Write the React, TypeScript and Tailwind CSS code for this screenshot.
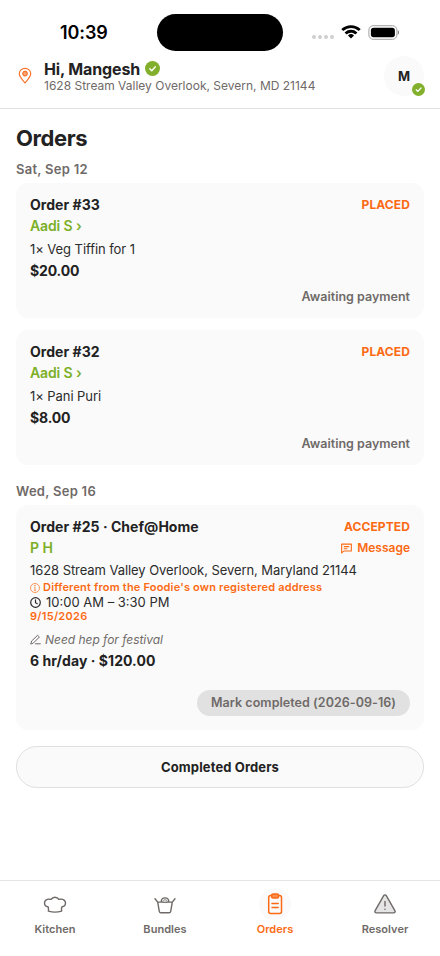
import type { ReactNode } from "react"

function CheckBadge({ className }: { className: string }) {
    return (
        <svg viewBox="0 0 14 14" className={className}>
            <circle cx="7" cy="7" r="7" fill="#83b02c" />
            <path d="M4.500 7.300l1.800 1.800 3.400-3.700" fill="none" stroke="#fff" strokeWidth="1.300" strokeLinecap="round" strokeLinejoin="round" />
        </svg>
    )
}

function StatusBar() {
    return (
        <div className="flex h-[52px] items-start">
            <div className="ml-[60px] mt-[22px] w-[97px] text-[18px] font-semibold leading-[22px] tracking-[-0.1px] text-black">10:39</div>
            <div className="mt-[14px] h-[37px] w-[126px] rounded-full bg-black" />
            <div className="ml-[29px] mt-[35px] flex gap-[2px]">
                <span className="size-1 rounded-full bg-[#cfcfcf]" />
                <span className="size-1 rounded-full bg-[#cfcfcf]" />
                <span className="size-1 rounded-full bg-[#cfcfcf]" />
                <span className="size-1 rounded-full bg-[#cfcfcf]" />
            </div>
            <svg viewBox="0 0 17 12.3" className="ml-[7px] mt-[25px] h-[14px] w-[20px]" fill="#000">
                <path d="M8.500 2.600c2.500 0 4.800.95 6.500 2.550.13.12.34.12.47 0l1.250-1.270a.35.35 0 0 0 0-.5 12 12 0 0 0-16.440 0 .35.35 0 0 0 0 .5l1.250 1.270c.13.12.34.12.47 0A9.500 9.500 0 0 1 8.500 2.600zm0 4.100c1.360 0 2.670.5 3.680 1.420.13.13.34.13.48 0l1.250-1.280a.35.35 0 0 0 0-.5 7.900 7.900 0 0 0-10.800 0 .35.35 0 0 0 0 .5l1.250 1.280c.13.13.34.13.47 0A5.430 5.430 0 0 1 8.500 6.700zm2.450 2.800a.35.35 0 0 0-.01-.5 3.800 3.800 0 0 0-4.880 0 .35.35 0 0 0 0 .5l2.200 2.220c.13.13.35.13.48 0z" />
            </svg>
            <svg viewBox="0 0 31 15" className="ml-[7px] mt-[25px] h-[15px] w-[31px]">
                <rect x=".9" y=".7" width="28" height="13.600" rx="4.300" fill="none" stroke="#a0a0a0" />
                <rect x="2.900" y="2.700" width="24" height="9.600" rx="2.700" fill="#000" />
                <path d="M29.900 5.300c1.400.6 1.400 3.800 0 4.400z" fill="#777" />
            </svg>
        </div>
    )
}

function Header() {
    return (
        <header className="flex h-[57px] items-start border-b border-[#e0e0e0]">
            <svg viewBox="0 0 14 18" className="ml-[18px] mt-[15px] h-[18px] w-[14px]" fill="none" stroke="#fa7128" strokeWidth="1.200">
                <path d="M7 15.900C5.500 13.800 1.300 10.200 1.300 6.800a5.700 5.500 0 0 1 11.400 0C12.700 10.200 8.500 13.800 7 15.900z" strokeLinejoin="round" />
                <circle cx="7" cy="6.600" r="2.200" fill="#f9a877" />
            </svg>
            <div className="ml-[12px] mt-[6px] flex-1">
                <div className="flex h-[21px] items-center gap-[5px]">
                    <span className="pt-px text-[16px] font-bold leading-[22px] tracking-[-0.15px]">Hi, Mangesh</span>
                    <CheckBadge className="size-[15px]" />
                </div>
                <div className="h-[14px] whitespace-nowrap text-[12px] leading-[14px] text-[#6f6a68]">1628 Stream Valley Overlook, Severn, MD 21144</div>
            </div>
            <div className="relative mr-4 mt-[4px] flex size-[40px] items-center justify-center rounded-full bg-[#fafafa] pt-px text-[13px] font-bold">
                M
                <CheckBadge className="absolute bottom-0 -right-px size-[13px]" />
            </div>
        </header>
    )
}

function DateHeading({ children }: { children: ReactNode }) {
    return <h2 className="h-[18px] text-[13px] font-semibold leading-[18px] tracking-[0.28px] text-[#6f6a68]">{children}</h2>
}

function CardTitle({ title, status }: { title: string; status: string }) {
    return (
        <div className="flex h-[17px] items-start justify-between">
            <h3 className="text-[14px] font-bold leading-[18px] tracking-[0.04px]">{title}</h3>
            <span className="text-[12px] font-bold leading-[17px] tracking-[0.1px] text-[#fc6a14]">{status}</span>
        </div>
    )
}

function OrderCard({ title, item, price }: { title: string; item: string; price: string }) {
    return (
        <section className="h-[135px] rounded-[12px] bg-[#fafafa] px-[14px] pt-[13px]">
            <CardTitle title={title} status="PLACED" />
            <p className="mt-[4px] text-[14px] font-semibold leading-[18px] tracking-[-0.12px] text-[#7caf27]">Aadi S ›</p>
            <p className="mt-[5px] text-[13px] leading-[18px] tracking-[-0.07px] text-[#2c2c2c]">{item}</p>
            <p className="mt-[4px] text-[14px] font-bold leading-[18px] tracking-[-0.15px]">{price}</p>
            <p className="mt-[8px] text-right text-[12.500px] font-semibold leading-[18px] text-[#6f6a68]">Awaiting payment</p>
        </section>
    )
}

function ChefCard() {
    return (
        <section className="h-[225px] rounded-[12px] bg-[#fafafa] px-[14px] pt-[13px]">
            <CardTitle title="Order #25 · Chef@Home" status="ACCEPTED" />
            <div className="mt-[4px] flex h-[18px] items-center justify-between">
                <span className="text-[14px] font-semibold leading-[18px] text-[#7caf27]">P H</span>
                <span className="flex items-center gap-[5px] text-[12px] font-semibold leading-[18px] text-[#fc6a14]">
                    <svg viewBox="0 0 12 12" className="size-[11px]" fill="none" stroke="currentColor" strokeWidth="1.200" strokeLinejoin="round">
                        <path d="M.7 1.200h10.600v7.600H3.200L.7 10.800zM3 3.900h6M3 6.200h4" />
                    </svg>
                    Message
                </span>
            </div>
            <p className="mt-[4px] whitespace-nowrap text-[13px] leading-[18px] tracking-[-0.07px] text-[#2c2c2c]">1628 Stream Valley Overlook, Severn, Maryland 21144</p>
            <p className="mt-px flex h-[15px] items-center gap-[3px] whitespace-nowrap text-[11px] font-semibold tracking-[0.19px] text-[#fc6a14]">
                <svg viewBox="0 0 10 10" className="size-[10px]" fill="none" stroke="currentColor" strokeWidth=".7">
                    <circle cx="5" cy="5" r="4.500" />
                    <path d="M4.200 4.300H5v2.900M4 7.300h2" />
                    <circle cx="5" cy="2.700" r=".3" fill="currentColor" />
                </svg>
                Different from the Foodie's own registered address
            </p>
            <p className="flex h-[14px] items-center gap-[5px] text-[13px] leading-[14px] text-[#2c2c2c]">
                <svg viewBox="0 0 11 11" className="size-[11px]" fill="none" stroke="currentColor" strokeWidth="1.200" strokeLinecap="round">
                    <circle cx="5.500" cy="5.500" r="4.800" />
                    <path d="M5.500 2.800v2.900l1.800 1" />
                </svg>
                10:00 AM – 3:30 PM
            </p>
            <p className="h-[14px] text-[11px] font-semibold leading-[14px] tracking-[0.28px] text-[#fc6a14]">9/15/2026</p>
            <p className="mt-[8px] flex h-[17px] items-center gap-[4px] text-[12px] italic leading-[17px] tracking-[-0.03px] text-[#6f6a68]">
                <svg viewBox="0 0 11 11" className="size-[11px]" fill="none" stroke="currentColor" strokeWidth="1" strokeLinejoin="round" strokeLinecap="round">
                    <path d="M.9 9.700l.8-2.800L7.600 1.300l1.800 1.700L3.500 8.900zM5.500 9.800h4.800" />
                </svg>
                Need hep for festival
            </p>
            <p className="mt-[4px] text-[14px] font-bold leading-[18px] tracking-[0.05px]">6 hr/day · $120.00</p>
            <div className="mt-[20px] flex justify-end">
                <button className="h-[26px] rounded-full bg-[#e1e1e1] px-[14px] text-[12.500px] font-semibold leading-[26px] tracking-[0.05px] text-[#6f6a68]">Mark completed (2026-09-16)</button>
            </div>
        </section>
    )
}

function Tab({ label, active, children }: { label: string; active?: boolean; children: ReactNode }) {
    return (
        <div className={active ? "flex flex-col items-center text-[#fc6a14]" : "flex flex-col items-center text-[#6f6a68]"}>
            <div className={active ? "flex size-8 items-center justify-center rounded-full bg-[#fafafa]" : "flex size-8 items-center justify-center"}>
                {children}
            </div>
            <span className="mt-[2px] text-[11px] font-semibold leading-[14px] tracking-[0.04px]">{label}</span>
        </div>
    )
}

function TabBar() {
    return (
        <nav className="grid h-[76px] grid-cols-4 border-t border-[#e4e4e4] pt-[7px]">
            <Tab label="Kitchen">
                <svg viewBox="0 0 24 24" className="size-6" fill="none" stroke="currentColor" strokeWidth="1.400" strokeLinejoin="round">
                    <path d="M5.400 19.200c.2-1.700.1-3-.2-4.200C3 14.700 1.500 13.200 1.500 11.100c0-2.500 2.200-4.200 5-3.900.7-.1 1.200 0 1.700.2C9 5.900 10.300 5.200 12 5.200s3 .7 3.800 2.200c.5-.2 1-.3 1.700-.2 2.800-.3 5 1.400 5 3.900 0 2.100-1.500 3.600-3.700 3.900-.3 1.200-.4 2.500-.2 4.200-4 1.100-9.200 1.100-13.200 0z" />
                </svg>
            </Tab>
            <Tab label="Bundles">
                <svg viewBox="0 0 24 24" className="size-6" fill="none" stroke="currentColor" strokeWidth="1.400" strokeLinecap="round" strokeLinejoin="round">
                    <path d="M2 6.700l2.700 3.400h14.600L22 6.700M4.700 10.100l1.600 9.200c.2 1 .7 1.400 1.600 1.400h8.200c.9 0 1.400-.4 1.600-1.400l1.600-9.200M8.200 10c0-2.500 1.500-4.100 3.800-4.100s3.800 1.600 3.800 4.100" />
                    <path d="M9.800 10c0-1.500.9-2.500 2.200-2.500s2.200 1 2.200 2.500z" fill="#d5d3d3" strokeWidth=".6" />
                </svg>
            </Tab>
            <Tab label="Orders" active>
                <svg viewBox="0 0 24 24" className="size-6" fill="none" stroke="currentColor" strokeWidth="1.500" strokeLinecap="round" strokeLinejoin="round">
                    <rect x="5.700" y="3.500" width="12.800" height="18" rx="2" />
                    <rect x="8.600" y="2.100" width="7" height="4" rx="1.500" fill="#fb8f50" />
                    <path d="M9 11.500h6.200M9 15.500h6.200" />
                </svg>
            </Tab>
            <Tab label="Resolver">
                <svg viewBox="0 0 24 24" className="size-6" fill="none" stroke="currentColor" strokeWidth="1.400" strokeLinecap="round" strokeLinejoin="round">
                    <path d="M10.700 3.600a1.500 1.500 0 0 1 2.600 0l8.700 15.200c.5 1-.1 2.100-1.300 2.100H3.300c-1.200 0-1.800-1.100-1.300-2.100z" fill="#e6e5e5" />
                    <path d="M12 9.500v4.500M12 17.300v.1" />
                </svg>
            </Tab>
        </nav>
    )
}

export default function App() {
    return (
        <div className="flex h-[956px] w-[440px] flex-col overflow-hidden bg-white font-['Inter',sans-serif] text-[#222222]">
            <StatusBar />
            <Header />
            <main className="flex-1 px-4 pt-[15px]">
                <h1 className="h-[28px] text-[22px] font-bold leading-[28px] tracking-[-0.4px]">Orders</h1>
                <div className="mt-[8px]">
                    <DateHeading>Sat, Sep 12</DateHeading>
                </div>
                <div className="mt-[5px] flex flex-col gap-3">
                    <OrderCard title="Order #33" item="1× Veg Tiffin for 1" price="$20.00" />
                    <OrderCard title="Order #32" item="1× Pani Puri" price="$8.00" />
                </div>
                <div className="mb-[5px] mt-[17px]">
                    <DateHeading>Wed, Sep 16</DateHeading>
                </div>
                <ChefCard />
                <button className="mt-4 h-[42px] w-full rounded-full border border-[#e0e0e0] bg-[#fafafa] pt-px text-[13px] font-bold tracking-[0.12px]">Completed Orders</button>
            </main>
            <TabBar />
        </div>
    )
}
